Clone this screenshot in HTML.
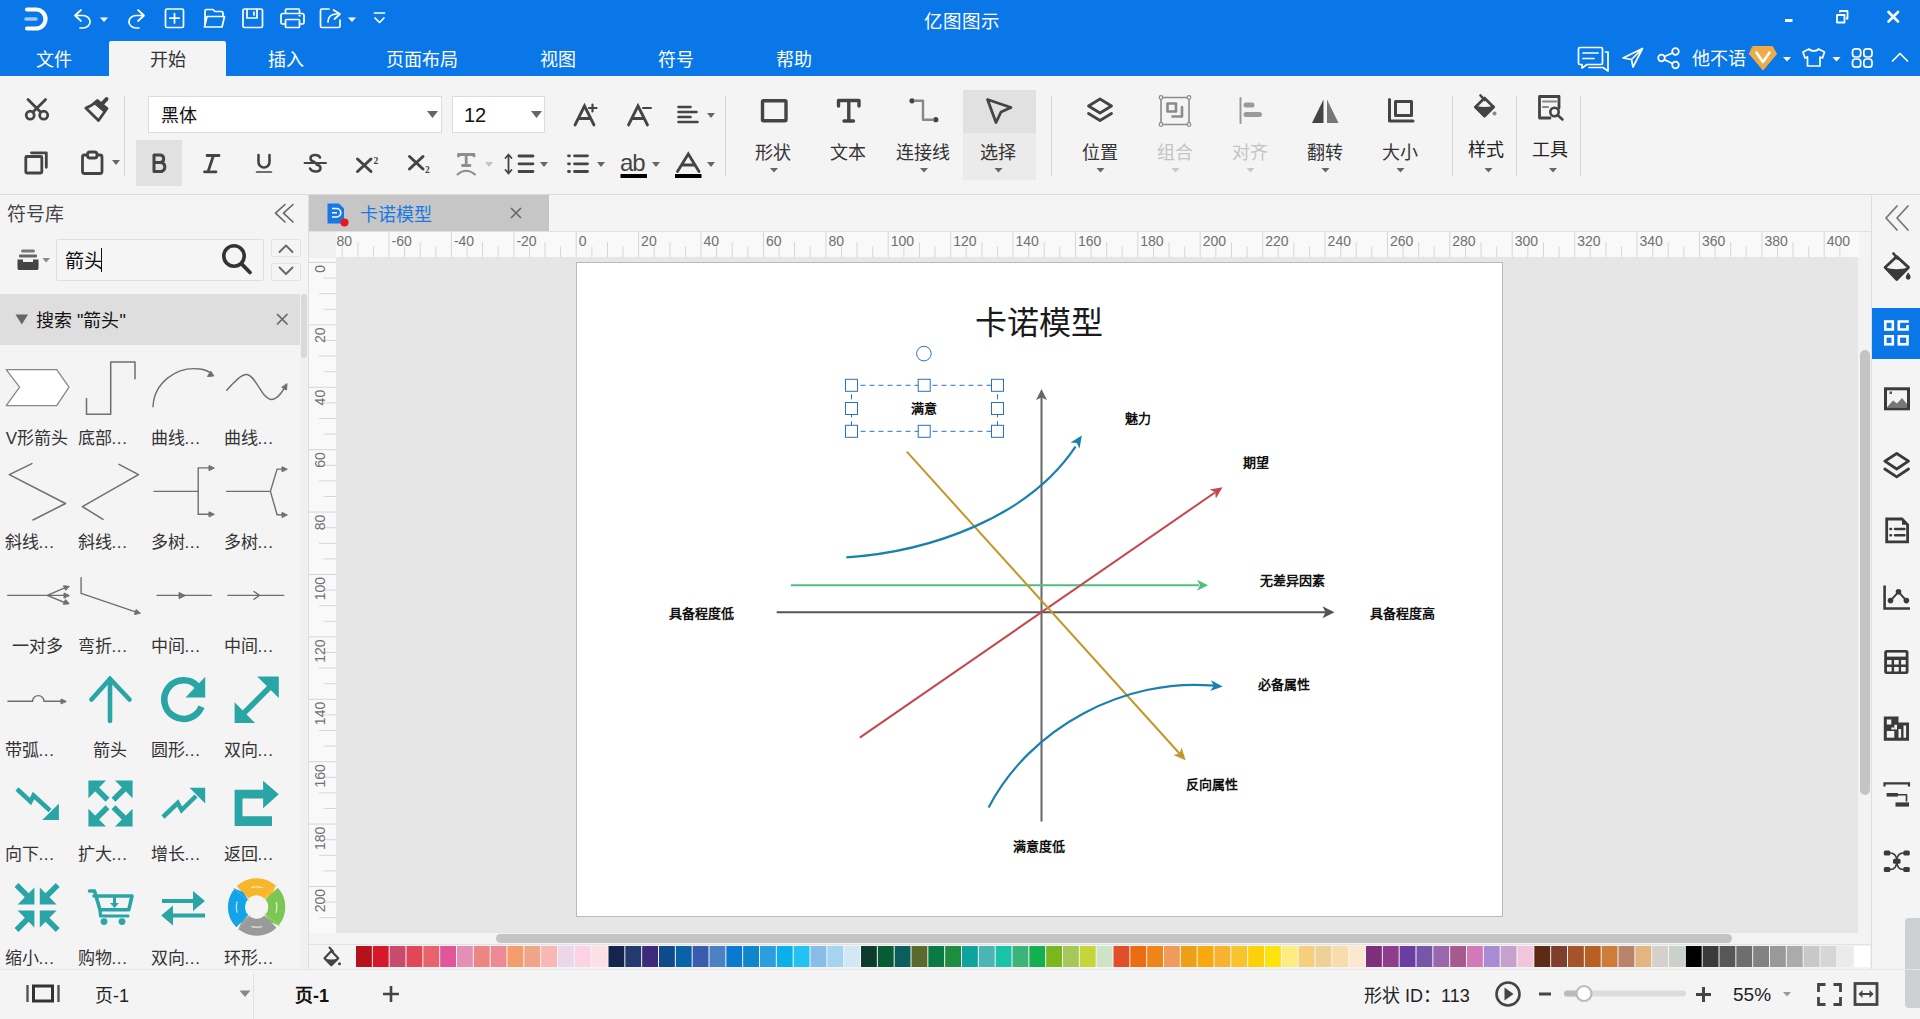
<!DOCTYPE html>
<html lang="zh-CN"><head><meta charset="utf-8">
<style>
*{margin:0;padding:0;box-sizing:border-box}
html,body{width:1920px;height:1019px;overflow:hidden;background:#f4f4f4;font-family:"Liberation Sans",sans-serif;color:#333}
.a{position:absolute}
svg{position:absolute;overflow:visible}
.t{position:absolute;white-space:nowrap;line-height:1}
.mn{position:absolute;top:50px;font-size:18px;color:#fff;line-height:20px;white-space:nowrap}
.lb{position:absolute;top:142.5px;font-size:18px;color:#333;line-height:20px;white-space:nowrap}
.sl{position:absolute;font-size:17px;color:#333;line-height:18px;white-space:nowrap}
</style></head><body>

<div class="a" style="left:0;top:0;width:1920px;height:76px;background:#0977e8"></div>
<div class="a" style="left:109px;top:41px;width:117px;height:36px;background:#f4f4f4;border-radius:2px 2px 0 0"></div>
<div class="t" style="left:924px;top:12.5px;font-size:18.5px;color:#fff">亿图图示</div>
<div class="mn" style="left:36px;color:#fff">文件</div>
<div class="mn" style="left:150px;color:#333">开始</div>
<div class="mn" style="left:268px;color:#fff">插入</div>
<div class="mn" style="left:386px;color:#fff">页面布局</div>
<div class="mn" style="left:540px;color:#fff">视图</div>
<div class="mn" style="left:658px;color:#fff">符号</div>
<div class="mn" style="left:776px;color:#fff">帮助</div>
<div class="t" style="left:1692px;top:50px;font-size:18px;color:#fff">他不语</div>
<svg style="left:0;top:0" width="1920" height="76" fill="none" stroke="#fff" stroke-width="1.7" stroke-linecap="round" stroke-linejoin="round">
 <path d="M27 9.5 H36 A9.5 9.5 0 0 1 36 28.5 H27" stroke-width="4.2"/>
 <path d="M26 19 H36" stroke-width="3.5" stroke="#9cc8f5"/>
 <path d="M75 15.5 L81 10 M75 15.5 L81 21 M75.5 15.5 H83 A7 6.2 0 0 1 83 28 H80"/>
 <path d="M100 17.5 H108 L104 22 Z" fill="#fff" stroke="none"/>
 <path d="M144 15.5 L138 10 M144 15.5 L138 21 M143.5 15.5 H136 A7 6.2 0 0 0 136 28 H139"/>
 <rect x="165.5" y="9" width="18" height="18.5" rx="1.5"/>
 <path d="M174.5 13.5 V23 M169.8 18.2 H179.2"/>
 <path d="M205 27 V11 A1.5 1.5 0 0 1 206.5 9.5 H213 L215 11.5 H221.5 A1.5 1.5 0 0 1 223 13 V15.5 M204.5 27 L207 16.5 H224.5 L222 27 Z"/>
 <rect x="243" y="9" width="19.5" height="18.5" rx="1.5"/>
 <path d="M247 9.5 V18 H257 V9.5 M254 12 V15"/>
 <path d="M285.5 13.5 V10 A1 1 0 0 1 286.5 9 H298.5 A1 1 0 0 1 299.5 10 V13.5 M285.5 24 H282.5 A1.5 1.5 0 0 1 281 22.5 V15.5 A2 2 0 0 1 283 13.5 H302 A2 2 0 0 1 304 15.5 V22.5 A1.5 1.5 0 0 1 302.5 24 H299.5"/>
 <rect x="285.5" y="19.5" width="14" height="8" rx="1"/>
 <path d="M299 15.8 H300" stroke-width="1.5"/>
 <path d="M329 9 H322 A1.5 1.5 0 0 0 320.5 10.5 V26 A1.5 1.5 0 0 0 322 27.5 H338.5 A1.5 1.5 0 0 0 340 26 V20"/>
 <path d="M328 22 C328 16 332 14 337 14 M333.5 10 L340 14 L334.5 19"/>
 <path d="M348 17.5 H356 L352 22 Z" fill="#fff" stroke="none"/>
 <path d="M374.5 13 H384.5"/>
 <path d="M375 18 L379.5 22.5 L384 18"/>
 <path d="M1785 20.5 H1792.5" stroke-width="3" stroke-linecap="butt"/>
 <rect x="1837" y="15" width="7.5" height="7.5" stroke-width="1.8"/>
 <path d="M1840 12.5 V11 H1847.5 V18.5 H1846" stroke-width="1.8" stroke-linecap="butt"/>
 <path d="M1888.5 12 L1898 21.5 M1898 12 L1888.5 21.5" stroke-width="2.6"/>
 <path d="M1580 47.5 H1601 A1.5 1.5 0 0 1 1602.5 49 V63 A1.5 1.5 0 0 1 1601 64.5 H1587 L1582 68 V64.5 H1580 A1.5 1.5 0 0 1 1578.5 63 V49 A1.5 1.5 0 0 1 1580 47.5 Z"/>
 <path d="M1583 53 H1598 M1583 58.5 H1594"/>
 <path d="M1605.5 52 H1608 V71 L1603 67.5 H1589"/>
 <path d="M1642.5 48.5 L1623 58 L1631.5 59.5 L1633 67 Z M1631.5 59.5 L1642.5 48.5"/>
 <circle cx="1675.5" cy="51.5" r="3.3"/><circle cx="1661.5" cy="58" r="3.3"/><circle cx="1675.5" cy="65" r="3.3"/>
 <path d="M1664.5 56.5 L1672.5 53 M1664.5 59.7 L1672.5 63.5"/>
 <path d="M1753 46.5 H1772.5 L1776.5 54 L1763 70 L1749.5 54 Z" fill="#f0ab45" stroke="#f0ab45" stroke-width="1"/>
 <path d="M1756.5 52.5 L1763 62 L1769.5 52.5" stroke-width="2.6"/>
 <path d="M1783 57 H1791 L1787 61.5 Z" fill="#fff" stroke="none"/>
 <path d="M1809 49 L1803 52 L1805 58 L1807.5 57 V66 H1820 V57 L1822.5 58 L1824.5 52 L1818.5 49 C1817 51.5 1810.5 51.5 1809 49 Z"/>
 <path d="M1832.5 57 H1840.5 L1836.5 61.5 Z" fill="#fff" stroke="none"/>
 <rect x="1852.5" y="48.8" width="8.2" height="8.2" rx="3"/><rect x="1863.8" y="48.8" width="8.2" height="8.2" rx="3"/>
 <rect x="1852.5" y="59" width="8.2" height="8.2" rx="3"/><rect x="1863.8" y="59" width="8.2" height="8.2" rx="3"/>
 <path d="M1892.5 61 L1900 53.5 L1907.5 61"/>
</svg>
<div class="a" style="left:0;top:194px;width:1920px;height:1px;background:#dadada"></div>
<div class="a" style="left:136px;top:140px;width:46px;height:46px;background:#e1e1e1"></div>
<div class="a" style="left:963px;top:90px;width:73px;height:43px;background:#e1e1e1"></div>
<div class="a" style="left:963px;top:133px;width:73px;height:47px;background:#ebebeb"></div>
<div class="a" style="left:148px;top:96px;width:294px;height:37px;background:#fff;border:1px solid #dcdcdc"></div>
<div class="a" style="left:452px;top:96px;width:93px;height:37px;background:#fff;border:1px solid #dcdcdc"></div>
<div class="t" style="left:161px;top:107px;font-size:18px;color:#111">黑体</div>
<div class="t" style="left:464px;top:105px;font-size:20px;color:#111">12</div>
<div class="a" style="left:124px;top:96px;width:1px;height:80px;background:#d4d4d4"></div>
<div class="a" style="left:725px;top:96px;width:1px;height:80px;background:#d4d4d4"></div>
<div class="a" style="left:1051px;top:96px;width:1px;height:80px;background:#d4d4d4"></div>
<div class="a" style="left:1452px;top:96px;width:1px;height:80px;background:#d4d4d4"></div>
<div class="a" style="left:1516px;top:96px;width:1px;height:80px;background:#d4d4d4"></div>
<div class="a" style="left:1580px;top:96px;width:1px;height:80px;background:#d4d4d4"></div>
<div class="lb" style="left:755px;width:36px;text-align:center;color:#333">形状</div>
<div class="lb" style="left:830px;width:36px;text-align:center;color:#333">文本</div>
<div class="lb" style="left:896px;width:54px;text-align:center;color:#333">连接线</div>
<div class="lb" style="left:980px;width:36px;text-align:center;color:#333">选择</div>
<div class="lb" style="left:1082px;width:36px;text-align:center;color:#333">位置</div>
<div class="lb" style="left:1157px;width:36px;text-align:center;color:#c4c4c4">组合</div>
<div class="lb" style="left:1232px;width:36px;text-align:center;color:#c4c4c4">对齐</div>
<div class="lb" style="left:1307px;width:36px;text-align:center;color:#333">翻转</div>
<div class="lb" style="left:1382px;width:36px;text-align:center;color:#333">大小</div>
<div class="lb" style="left:1468px;top:139.5px;color:#222">样式</div>
<div class="lb" style="left:1532px;top:139.5px;color:#222">工具</div>
<svg style="left:0;top:0" width="1920" height="200" fill="none" stroke="#444" stroke-width="2.8" stroke-linecap="round" stroke-linejoin="round"><circle cx="30.2" cy="115.2" r="4"/><circle cx="43.7" cy="115.2" r="4"/><path d="M28 99.5 L40.5 112 M45.6 99.5 L33 112" /><path d="M85.8 108 Q92 106 97.5 100.5 L107 108.5 L98.5 120.5 Z" stroke-width="2.8"/><path d="M97.5 100.5 L107 108.5 L104.5 112.5 L94.5 104 Z" fill="#444" stroke-width="1"/><path d="M102 104 L106.5 99" stroke-width="4"/><rect x="25.8" y="156.5" width="16" height="16.5" rx="1"/><path d="M31.5 152.8 H46.3 V167.3"/><rect x="82.5" y="155" width="19.5" height="18.5" rx="2"/><rect x="87.5" y="152" width="9.5" height="6" rx="2.5" fill="#f4f4f4"/><path d="M112 160 H120 L116.0 165 Z" fill="#666" stroke="none"/><path d="M154 155 V171.5 H161.5 A4.7 4.7 0 0 0 161.5 162.5 H154 M154 155 H160.5 A3.8 3.8 0 0 1 160.5 162.5" stroke-width="3"/><path d="M207 155.5 H219 M204.5 171.8 H216 M213.5 155.5 L208 171.8" stroke-width="2.8"/><path d="M258.5 155 V162 A5.3 5.3 0 0 0 269.5 162 V155" stroke-width="2.6"/><path d="M256.5 172 H271.5" stroke-width="1.6"/><path d="M320 157.5 C318.5 154 310.5 154 310.5 158.5 C310.5 160.5 312.5 161.5 314.5 162 M316.5 164.5 C318.5 165 320.5 166 320.5 168 C320.5 172.5 312 172.5 310 168.5" stroke-width="2.6"/><path d="M304.5 163 H326" stroke-width="1.8"/><path d="M357.5 159 L371 171.5 M371 159 L357.5 171.5" stroke-width="3"/><text x="373.5" y="163.5" font-size="9.5" fill="#444" stroke="none" font-family="Liberation Serif" font-weight="bold">2</text><path d="M409.5 156.5 L423 169 M423 156.5 L409.5 169" stroke-width="3"/><text x="425" y="172.5" font-size="9.5" fill="#444" stroke="none" font-family="Liberation Serif" font-weight="bold">2</text><g stroke="#8d8d8d"><path d="M458.5 156 V154.5 H474 V156 M466.2 154.5 V165.5 M462.5 165.5 H470" stroke-width="2.8"/><path d="M457.5 174.5 Q466 167 475 174.5" stroke-width="2"/></g><path d="M485 162 H493 L489.0 167 Z" fill="#c4c4c4" stroke="none"/><path d="M508.5 155 V173.5 M505.5 158 L508.5 154.5 L511.5 158 M505.5 170 L508.5 173.5 L511.5 170" stroke-width="1.8"/><path d="M519 156 H533 M519 163.8 H533 M519 171.5 H533" stroke-width="2.8"/><path d="M540 162 H548 L544.0 167 Z" fill="#666" stroke="none"/><path d="M568.5 155.8 H569.5 M568.5 163.8 H569.5 M568.5 171.5 H569.5" stroke-width="2.8"/><path d="M574.5 155.8 H587.5 M574.5 163.8 H587.5 M574.5 171.5 H587.5" stroke-width="2.8"/><path d="M597 162 H605 L601.0 167 Z" fill="#666" stroke="none"/><text x="620" y="171" font-size="24" fill="#444" stroke="none" font-family="Liberation Sans" letter-spacing="-1">ab</text><rect x="620.5" y="174" width="26.5" height="4" fill="#000" stroke="none"/><path d="M652 162 H660 L656.0 167 Z" fill="#666" stroke="none"/><path d="M677.5 171.5 L688.3 154 L699 171.5 M681.5 165 H695" stroke-width="2.8" stroke-linejoin="miter"/><rect x="675" y="174" width="26.5" height="4" fill="#000" stroke="none"/><path d="M707 162 H715 L711.0 167 Z" fill="#666" stroke="none"/><path d="M575 125 L584.5 106 L594 125 M578.5 118.5 H590.5" stroke-width="2.8" stroke-linejoin="miter"/><path d="M592.5 104.5 V111.5 M589 108 H596.5" stroke-width="2.2"/><path d="M628.5 125 L638 106 L647.5 125 M632 118.5 H644" stroke-width="2.8" stroke-linejoin="miter"/><path d="M643 108 H651" stroke-width="2"/><path d="M678.5 107 H690.5 M678.5 112 H696.5 M678.5 117 H690.5 M678.5 122 H697.5" stroke-width="2.6"/><path d="M707 113 H715 L711.0 118 Z" fill="#666" stroke="none"/><path d="M427 111 H438 L432.5 118 Z" fill="#666" stroke="none"/><path d="M531 111 H542 L536.5 118 Z" fill="#666" stroke="none"/><rect x="762.5" y="100.8" width="23.5" height="20" rx="1" stroke-width="3.4"/><path d="M770 168 H778 L774.0 172.5 Z" fill="#666" stroke="none"/><path d="M838.5 106 V100.5 H859 V106 M848.8 100.5 V121 M844 121 H853.5" stroke-width="3.4"/><circle cx="912" cy="100.8" r="2.6" fill="#444" stroke="none"/><circle cx="935.8" cy="119.7" r="2.6" fill="#444" stroke="none"/><path d="M915 100.8 H923 V119.7 H933" stroke="#888" stroke-width="2.4"/><path d="M920 168 H928 L924.0 172.5 Z" fill="#666" stroke="none"/><path d="M987.5 99.5 L1011 107.5 L1001 112 L996 122.5 Z" stroke-width="2.8"/><path d="M994.5 168 H1002.5 L998.5 172.5 Z" fill="#666" stroke="none"/><path d="M1100 99 L1111.5 106 L1100 113 L1088.5 106 Z" stroke-width="2.8"/><path d="M1088.5 113.5 L1100 120.5 L1111.5 113.5" stroke-width="2.8"/><path d="M1096.5 168 H1104.5 L1100.5 172.5 Z" fill="#666" stroke="none"/><g stroke="#8a8a8a" stroke-width="1.6"><rect x="1161" y="97.5" width="28" height="27"/><rect x="1167.5" y="103.5" width="8.5" height="8" stroke-width="2.6"/><path d="M1172.5 116.5 H1182 V107" stroke-width="2.6"/></g><g fill="#f4f4f4" stroke="#8a8a8a" stroke-width="1.2"><circle cx="1161" cy="97.5" r="1.8"/><circle cx="1189" cy="97.5" r="1.8"/><circle cx="1161" cy="124.5" r="1.8"/><circle cx="1189" cy="124.5" r="1.8"/></g><path d="M1171.5 168 H1179.5 L1175.5 172.5 Z" fill="#c8c8c8" stroke="none"/><g stroke="#9a9a9a"><path d="M1240.5 98 V123" stroke-width="2"/><path d="M1246 105 H1252 M1246 114.5 H1259.5" stroke-width="5"/></g><path d="M1246.5 168 H1254.5 L1250.5 172.5 Z" fill="#c8c8c8" stroke="none"/><path d="M1323.5 99.5 V123 H1312 Z" fill="#444" stroke="none"/><path d="M1327 99.5 V123 H1338.5 Z" fill="#777" stroke="none"/><path d="M1321.5 168 H1329.5 L1325.5 172.5 Z" fill="#666" stroke="none"/><path d="M1389.5 99.5 V121 H1413" stroke-width="3"/><rect x="1395.5" y="101.5" width="16" height="14" stroke-width="3"/><path d="M1396.5 168 H1404.5 L1400.5 172.5 Z" fill="#666" stroke="none"/><path d="M1480.5 95.5 L1484.5 100" stroke-width="2.6"/><path d="M1475.5 107 L1484.5 98 L1493.5 107 L1484.5 116 Z" stroke-width="2.6"/><path d="M1475.5 107 Q1484.5 110 1493.5 107 L1484.5 116 Z" fill="#444"/><circle cx="1494.5" cy="113.5" r="2" fill="#888" stroke="none"/><path d="M1484.5 168 H1492.5 L1488.5 172.5 Z" fill="#666" stroke="none"/><path d="M1559 108 V96.5 H1539.5 V118 H1550" stroke-width="2.8"/><path d="M1543 101.5 H1556 M1543 107 H1548" stroke="#888" stroke-width="2.2"/><circle cx="1554.5" cy="112" r="4.2" stroke-width="2.6"/><path d="M1557.5 115 L1562.5 119.5" stroke-width="2.6"/><path d="M1549 168 H1557 L1553.0 172.5 Z" fill="#666" stroke="none"/></svg>
<div class="t" style="left:7px;top:205px;font-size:19px;color:#444">符号库</div>
<div class="a" style="left:56px;top:239px;width:208px;height:42px;border:1px solid #dedede;background:#f5f5f5;border-radius:2px"></div>
<div class="a" style="left:271px;top:239px;width:30px;height:18px;border:1px solid #e3e3e3;border-radius:2px"></div>
<div class="a" style="left:271px;top:263px;width:30px;height:18px;border:1px solid #e3e3e3;border-radius:2px"></div>
<div class="t" style="left:65px;top:252px;font-size:19px;color:#111">箭头</div>
<div class="a" style="left:101px;top:248px;width:1px;height:24px;background:#111"></div>
<div class="a" style="left:0;top:294px;width:300px;height:51px;background:#dedede"></div>
<div class="t" style="left:36px;top:312px;font-size:18px;color:#111">搜索 "箭头"</div>
<div class="a" style="left:300px;top:294px;width:8px;height:675px;background:#f0f0f0"></div>
<div class="a" style="left:301px;top:294px;width:6px;height:64px;background:#d9d9d9;border-radius:3px"></div>
<div class="a" style="left:308px;top:195px;width:1px;height:774px;background:#dedede"></div>
<svg style="left:0;top:0" width="310" height="969" fill="none" stroke="#666" stroke-width="1.8" stroke-linecap="round" stroke-linejoin="round"><path d="M285 204.5 L275.5 213.2 L285 222 M293 204.5 L283.5 213.2 L293 222" stroke="#666" stroke-width="1.6"/><g fill="#444" stroke="none"><rect x="21" y="249.5" width="14" height="3" rx="1.5" fill="#777"/><rect x="19" y="254.5" width="18" height="3" rx="1" fill="#666"/><path d="M17.5 259.5 H23 V262 H33 V259.5 H38.5 V268.5 A1.5 1.5 0 0 1 37 270 H19 A1.5 1.5 0 0 1 17.5 268.5 Z"/></g><path d="M42.5 258 H50 L46.2 262.5 Z" fill="#888" stroke="none"/><circle cx="234" cy="256" r="10.2" stroke="#333" stroke-width="3.6"/><path d="M241.8 264.2 L250 272.5" stroke="#333" stroke-width="3.8"/><path d="M279.5 252 L286 245.5 L292.5 252 M279.5 267.5 L286 274 L292.5 267.5" stroke="#666" stroke-width="1.8"/><path d="M15.5 314.5 H28 L21.8 324.5 Z" fill="#666" stroke="none"/><path d="M277.5 314.5 L287 324 M287 314.5 L277.5 324" stroke="#666" stroke-width="1.7"/><path d="M6.2 369.6 H56.7 L69 387.1 L56.7 405.6 H6.2 L19.6 387.1 Z" fill="#fff" stroke="#888" stroke-width="1.3"/><path d="M86.5 398.4 V414.3 H110.7 V362 H135 V378.8" stroke="#6e6e6e" stroke-width="1.5"/><path d="M153 406.7 C154 383 176 366 200 369 C206 370 210 372 212 374" stroke="#6e6e6e" stroke-width="1.4"/><path d="M213.5 376 L207.5 376.5 L210.5 371.5 Z" fill="#6e6e6e" stroke="#6e6e6e" stroke-width="1"/><path d="M226.7 390.2 C236 380 242 374 247 374.5 C256 375.5 262 400 272 399.5 C278 399 282 392 285.5 386.5" stroke="#6e6e6e" stroke-width="1.4"/><path d="M287 384 L286.5 390 L282 387.5 Z" fill="#6e6e6e" stroke="#6e6e6e" stroke-width="1"/><path d="M31.9 463.7 L9.3 474.7 L65.5 503.5 L33 520" stroke="#6e6e6e" stroke-width="1.5"/><path d="M119 464.4 L138.5 474.7 L82.4 506.6 L103 519.4" stroke="#6e6e6e" stroke-width="1.5"/><path d="M154 491.4 H198.2 M198.2 467.9 V514.2 M198.2 467.9 H211 M198.2 514.2 H211" stroke="#6e6e6e" stroke-width="1.4"/><path d="M214 467.9 L209 465.5 V470.3 Z M214 514.2 L209 511.8 V516.6 Z" fill="#6e6e6e" stroke="#6e6e6e" stroke-width="1"/><path d="M226.7 491.4 H270.4 L277.1 469.1 H284 M270.4 491.4 L277.1 514.8 H284" stroke="#6e6e6e" stroke-width="1.4"/><path d="M287 469.1 L282 466.7 V471.5 Z M287 514.8 L282 512.4 V517.2 Z" fill="#6e6e6e" stroke="#6e6e6e" stroke-width="1"/><path d="M7.7 595.4 H68 M47.2 595.4 L67 586.8 M47.2 595.4 L67 603.5" stroke="#6e6e6e" stroke-width="1.4"/><path d="M69 586.3 L63.5 585.8 L65.5 590 Z M69 595.4 L64 593 V597.8 Z M69 603.5 L65.5 599.5 L63.5 604 Z" fill="#6e6e6e" stroke="#6e6e6e" stroke-width="1"/><path d="M81.1 577.6 V593.4 L137 612.3" stroke="#6e6e6e" stroke-width="1.4"/><path d="M140 613.3 L134.5 614.5 L136 609.8 Z" fill="#6e6e6e" stroke="#6e6e6e" stroke-width="1"/><path d="M157 595.4 H211.3" stroke="#6e6e6e" stroke-width="1.4"/><path d="M185 595.4 L179 592.5 V598.3 Z" fill="#6e6e6e" stroke="#6e6e6e" stroke-width="1"/><path d="M227.9 595.4 H283.7 M254 591.5 L259.5 595.4 L254 599.3" stroke="#6e6e6e" stroke-width="1.4"/><path d="M7.9 701.3 H32.6 A5.7 5.7 0 0 1 44 701.3 H63" stroke="#6e6e6e" stroke-width="1.4"/><path d="M66 701.3 L61 699 V703.6 Z" fill="#6e6e6e" stroke="#6e6e6e" stroke-width="1"/><g stroke="#2aa5a6" stroke-width="4.6"><path d="M110 679 V721" stroke-linecap="round"/><path d="M91.5 699.5 L110 679 L129.5 699.5" stroke-linecap="round" stroke-linejoin="miter"/></g><path d="M197.94 686.69 A19.3 19.3 0 1 0 201.49 706.83" stroke="#2aa5a6" stroke-width="6.6" stroke-linecap="butt"/><path d="M185.5 697.5 L205.2 676.8 V697.5 Z" fill="#2aa5a6" stroke="none"/><path d="M240.5 716.5 L272 685" stroke="#2aa5a6" stroke-width="5.5" stroke-linecap="butt"/><path d="M257.2 676.4 H278.8 V698 Z M234.6 702.3 V722.9 H255 Z" fill="#2aa5a6" stroke="none"/><path d="M17 789 L30.5 801.5 L33.5 795.5 L50 810.5" stroke="#2aa5a6" stroke-width="4.5" stroke-linecap="butt" stroke-linejoin="miter"/><path d="M58.9 803.4 V820.1 H42.2 Z" fill="#2aa5a6" stroke="none"/><g fill="#2aa5a6" stroke="none"><path d="M88.4 780.6 H106 L88.4 798.2 Z M132.6 780.6 H115 L132.6 798.2 Z M88.4 826.4 H106 L88.4 808.8 Z M132.6 826.4 H115 L132.6 808.8 Z"/></g><g stroke="#2aa5a6" stroke-width="5.5" stroke-linecap="butt"><path d="M94 786.2 L107.5 799.7 M127 786.2 L113.5 799.7 M94 820.8 L107.5 807.3 M127 820.8 L113.5 807.3"/></g><path d="M163 817 L177.7 803 L181.6 810 L196 796" stroke="#2aa5a6" stroke-width="4.5" stroke-linecap="butt" stroke-linejoin="miter"/><path d="M189.5 787.7 H205.2 V803.4 Z" fill="#2aa5a6" stroke="none"/><path d="M263.1 780.8 L278.8 794.2 L263.1 808.3 V798.5 H242.5 V816.2 H272 V826 H234.6 V789.7 H263.1 Z" fill="#2aa5a6" stroke="none"/><g fill="#2aa5a6" stroke="none"><path d="M34.4 904.4 V887.6 L17.6 904.4 Z M39.8 904.4 V887.6 L56.6 904.4 Z M34.4 910.6 V927.4 L17.6 910.6 Z M39.8 910.6 V927.4 L56.6 910.6 Z"/></g><g stroke="#2aa5a6" stroke-width="5.5" stroke-linecap="butt"><path d="M16.5 885 L28 896.5 M57.7 885 L46.2 896.5 M16.5 930 L28 918.5 M57.7 930 L46.2 918.5"/></g><g stroke="#2aa5a6" fill="none" stroke-linejoin="round" stroke-linecap="round"><path d="M89.5 891 H94.5 L100 909.8 H128.8 L132 896 H94" stroke-width="3.6"/><path d="M100 909.8 L100.5 916 H128" stroke-width="3.2"/><path d="M114.5 897.5 V905.5" stroke-width="3"/></g><path d="M110 903 H119 L114.5 908 Z" fill="#2aa5a6" stroke="none"/><circle cx="104" cy="921.6" r="3.4" fill="#2aa5a6" stroke="none"/><circle cx="122" cy="921.6" r="3.4" fill="#2aa5a6" stroke="none"/><path d="M162 901 H195 M170 915.5 H205" stroke="#2aa5a6" stroke-width="4" stroke-linecap="butt"/><path d="M193 891 L205 901 L193 911 Z M173 905.5 L161.2 915.5 L173 925.5 Z" fill="#2aa5a6" stroke="none"/><path d="M242.57 892.47 A20.2 20.2 0 0 1 269.85 891.75" stroke="#f8b62a" stroke-width="17" fill="none" stroke-linecap="butt"/><path d="M276.74 883.83 L272.07 894.02 L262.96 899.68 Z" fill="#f8b62a" stroke="none"/><path d="M251.94 887.34 A20.2 20.2 0 0 1 261.94 887.52" stroke="#fff" stroke-width="1.3" opacity="0.75" fill="none" stroke-dasharray="2 1"/><path d="M271.61 893.48 A20.2 20.2 0 0 1 272.30 919.71" stroke="#7cc653" stroke-width="17" fill="none" stroke-linecap="butt"/><path d="M280.46 926.32 L270.12 922.01 L264.14 913.10 Z" fill="#7cc653" stroke="none"/><path d="M276.26 902.34 A20.2 20.2 0 0 1 276.08 912.34" stroke="#fff" stroke-width="1.3" opacity="0.75" fill="none" stroke-dasharray="2 1"/><path d="M270.63 921.53 A20.2 20.2 0 0 1 244.16 922.92" stroke="#9a9a9a" stroke-width="17" fill="none" stroke-linecap="butt"/><path d="M237.70 931.19 L241.83 920.78 L250.63 914.64 Z" fill="#9a9a9a" stroke="none"/><path d="M261.77 926.53 A20.2 20.2 0 0 1 251.77 926.61" stroke="#fff" stroke-width="1.3" opacity="0.75" fill="none" stroke-dasharray="2 1"/><path d="M242.32 921.28 A20.2 20.2 0 0 1 240.90 894.29" stroke="#14a3e6" stroke-width="17" fill="none" stroke-linecap="butt"/><path d="M232.74 887.68 L243.08 891.99 L249.06 900.90 Z" fill="#14a3e6" stroke="none"/><path d="M237.07 912.17 A20.2 20.2 0 0 1 236.99 902.17" stroke="#fff" stroke-width="1.3" opacity="0.75" fill="none" stroke-dasharray="2 1"/></svg>
<div class="sl" style="left:-3px;top:430px;width:80px;text-align:center">V形箭头</div>
<div class="sl" style="left:77.5px;top:430px">底部<span style="letter-spacing:0.6px">...</span></div>
<div class="sl" style="left:150.5px;top:430px">曲线<span style="letter-spacing:0.6px">...</span></div>
<div class="sl" style="left:223.5px;top:430px">曲线<span style="letter-spacing:0.6px">...</span></div>
<div class="sl" style="left:4.5px;top:534px">斜线<span style="letter-spacing:0.6px">...</span></div>
<div class="sl" style="left:77.5px;top:534px">斜线<span style="letter-spacing:0.6px">...</span></div>
<div class="sl" style="left:150.5px;top:534px">多树<span style="letter-spacing:0.6px">...</span></div>
<div class="sl" style="left:223.5px;top:534px">多树<span style="letter-spacing:0.6px">...</span></div>
<div class="sl" style="left:-3px;top:638px;width:80px;text-align:center">一对多</div>
<div class="sl" style="left:77.5px;top:638px">弯折<span style="letter-spacing:0.6px">...</span></div>
<div class="sl" style="left:150.5px;top:638px">中间<span style="letter-spacing:0.6px">...</span></div>
<div class="sl" style="left:223.5px;top:638px">中间<span style="letter-spacing:0.6px">...</span></div>
<div class="sl" style="left:4.5px;top:742px">带弧<span style="letter-spacing:0.6px">...</span></div>
<div class="sl" style="left:70px;top:742px;width:80px;text-align:center">箭头</div>
<div class="sl" style="left:150.5px;top:742px">圆形<span style="letter-spacing:0.6px">...</span></div>
<div class="sl" style="left:223.5px;top:742px">双向<span style="letter-spacing:0.6px">...</span></div>
<div class="sl" style="left:4.5px;top:846px">向下<span style="letter-spacing:0.6px">...</span></div>
<div class="sl" style="left:77.5px;top:846px">扩大<span style="letter-spacing:0.6px">...</span></div>
<div class="sl" style="left:150.5px;top:846px">增长<span style="letter-spacing:0.6px">...</span></div>
<div class="sl" style="left:223.5px;top:846px">返回<span style="letter-spacing:0.6px">...</span></div>
<div class="sl" style="left:4.5px;top:950px">缩小<span style="letter-spacing:0.6px">...</span></div>
<div class="sl" style="left:77.5px;top:950px">购物<span style="letter-spacing:0.6px">...</span></div>
<div class="sl" style="left:150.5px;top:950px">双向<span style="letter-spacing:0.6px">...</span></div>
<div class="sl" style="left:223.5px;top:950px">环形<span style="letter-spacing:0.6px">...</span></div>
<div class="a" style="left:309px;top:195px;width:240px;height:36px;background:#c6c6c6"></div>
<div class="t" style="left:360px;top:206px;font-size:18px;color:#1a7ae0">卡诺模型</div>
<svg style="left:0;top:0" width="1920" height="240" fill="none">
<path d="M327.5 203.5 H339 L344 208.5 V223.5 H327.5 Z" fill="#1677e6"/>
<path d="M332 208.5 H336.5 A4.2 4.2 0 0 1 336.5 217 H332 M332 212.8 H337" stroke="#fff" stroke-width="1.6"/>
<circle cx="344.5" cy="222.5" r="4" fill="#e8151a"/>
<path d="M511 208 L521 218 M521 208 L511 218" stroke="#666" stroke-width="1.6"/>
</svg>
<div class="a" style="left:309px;top:231px;width:1562px;height:1px;background:#e0e0e0"></div>
<div class="a" style="left:309px;top:232px;width:1550px;height:25px;background:#f9f9f9"></div>
<div class="a" style="left:309px;top:257px;width:27px;height:677px;background:#f9f9f9"></div>
<div class="a" style="left:309px;top:232px;width:27px;height:26px;background:#f0f0f0"></div>
<div class="a" style="left:336px;top:257px;width:1522px;height:676px;background:#e6e6e6"></div>
<div class="a" style="left:576px;top:262px;width:927px;height:655px;background:#fff;border:1px solid #b9b9b9"></div>
<div class="a" style="left:336px;top:232px;width:1522px;height:25px;overflow:hidden">
<svg style="left:-336px;top:-232px" width="1920" height="260"><path d="M342.2 246.5 V257" stroke="#d6d6d6" stroke-width="1"/><path d="M357.9 242 V257" stroke="#d6d6d6" stroke-width="1"/><path d="M373.4 246.5 V257" stroke="#d6d6d6" stroke-width="1"/><path d="M389.0 232 V257" stroke="#d6d6d6" stroke-width="1"/><path d="M404.6 246.5 V257" stroke="#d6d6d6" stroke-width="1"/><path d="M420.2 242 V257" stroke="#d6d6d6" stroke-width="1"/><path d="M435.9 246.5 V257" stroke="#d6d6d6" stroke-width="1"/><path d="M451.4 232 V257" stroke="#d6d6d6" stroke-width="1"/><path d="M467.1 246.5 V257" stroke="#d6d6d6" stroke-width="1"/><path d="M482.6 242 V257" stroke="#d6d6d6" stroke-width="1"/><path d="M498.2 246.5 V257" stroke="#d6d6d6" stroke-width="1"/><path d="M513.9 232 V257" stroke="#d6d6d6" stroke-width="1"/><path d="M529.5 246.5 V257" stroke="#d6d6d6" stroke-width="1"/><path d="M545.0 242 V257" stroke="#d6d6d6" stroke-width="1"/><path d="M560.6 246.5 V257" stroke="#d6d6d6" stroke-width="1"/><path d="M576.2 232 V257" stroke="#d6d6d6" stroke-width="1"/><path d="M591.9 246.5 V257" stroke="#d6d6d6" stroke-width="1"/><path d="M607.5 242 V257" stroke="#d6d6d6" stroke-width="1"/><path d="M623.0 246.5 V257" stroke="#d6d6d6" stroke-width="1"/><path d="M638.6 232 V257" stroke="#d6d6d6" stroke-width="1"/><path d="M654.2 246.5 V257" stroke="#d6d6d6" stroke-width="1"/><path d="M669.9 242 V257" stroke="#d6d6d6" stroke-width="1"/><path d="M685.5 246.5 V257" stroke="#d6d6d6" stroke-width="1"/><path d="M701.0 232 V257" stroke="#d6d6d6" stroke-width="1"/><path d="M716.6 246.5 V257" stroke="#d6d6d6" stroke-width="1"/><path d="M732.2 242 V257" stroke="#d6d6d6" stroke-width="1"/><path d="M747.9 246.5 V257" stroke="#d6d6d6" stroke-width="1"/><path d="M763.5 232 V257" stroke="#d6d6d6" stroke-width="1"/><path d="M779.0 246.5 V257" stroke="#d6d6d6" stroke-width="1"/><path d="M794.6 242 V257" stroke="#d6d6d6" stroke-width="1"/><path d="M810.2 246.5 V257" stroke="#d6d6d6" stroke-width="1"/><path d="M825.9 232 V257" stroke="#d6d6d6" stroke-width="1"/><path d="M841.5 246.5 V257" stroke="#d6d6d6" stroke-width="1"/><path d="M857.0 242 V257" stroke="#d6d6d6" stroke-width="1"/><path d="M872.7 246.5 V257" stroke="#d6d6d6" stroke-width="1"/><path d="M888.2 232 V257" stroke="#d6d6d6" stroke-width="1"/><path d="M903.9 246.5 V257" stroke="#d6d6d6" stroke-width="1"/><path d="M919.5 242 V257" stroke="#d6d6d6" stroke-width="1"/><path d="M935.0 246.5 V257" stroke="#d6d6d6" stroke-width="1"/><path d="M950.7 232 V257" stroke="#d6d6d6" stroke-width="1"/><path d="M966.2 246.5 V257" stroke="#d6d6d6" stroke-width="1"/><path d="M981.9 242 V257" stroke="#d6d6d6" stroke-width="1"/><path d="M997.5 246.5 V257" stroke="#d6d6d6" stroke-width="1"/><path d="M1013.0 232 V257" stroke="#d6d6d6" stroke-width="1"/><path d="M1028.7 246.5 V257" stroke="#d6d6d6" stroke-width="1"/><path d="M1044.2 242 V257" stroke="#d6d6d6" stroke-width="1"/><path d="M1059.8 246.5 V257" stroke="#d6d6d6" stroke-width="1"/><path d="M1075.5 232 V257" stroke="#d6d6d6" stroke-width="1"/><path d="M1091.1 246.5 V257" stroke="#d6d6d6" stroke-width="1"/><path d="M1106.7 242 V257" stroke="#d6d6d6" stroke-width="1"/><path d="M1122.2 246.5 V257" stroke="#d6d6d6" stroke-width="1"/><path d="M1137.8 232 V257" stroke="#d6d6d6" stroke-width="1"/><path d="M1153.5 246.5 V257" stroke="#d6d6d6" stroke-width="1"/><path d="M1169.1 242 V257" stroke="#d6d6d6" stroke-width="1"/><path d="M1184.7 246.5 V257" stroke="#d6d6d6" stroke-width="1"/><path d="M1200.2 232 V257" stroke="#d6d6d6" stroke-width="1"/><path d="M1215.8 246.5 V257" stroke="#d6d6d6" stroke-width="1"/><path d="M1231.5 242 V257" stroke="#d6d6d6" stroke-width="1"/><path d="M1247.1 246.5 V257" stroke="#d6d6d6" stroke-width="1"/><path d="M1262.7 232 V257" stroke="#d6d6d6" stroke-width="1"/><path d="M1278.2 246.5 V257" stroke="#d6d6d6" stroke-width="1"/><path d="M1293.8 242 V257" stroke="#d6d6d6" stroke-width="1"/><path d="M1309.5 246.5 V257" stroke="#d6d6d6" stroke-width="1"/><path d="M1325.1 232 V257" stroke="#d6d6d6" stroke-width="1"/><path d="M1340.7 246.5 V257" stroke="#d6d6d6" stroke-width="1"/><path d="M1356.2 242 V257" stroke="#d6d6d6" stroke-width="1"/><path d="M1371.8 246.5 V257" stroke="#d6d6d6" stroke-width="1"/><path d="M1387.5 232 V257" stroke="#d6d6d6" stroke-width="1"/><path d="M1403.1 246.5 V257" stroke="#d6d6d6" stroke-width="1"/><path d="M1418.7 242 V257" stroke="#d6d6d6" stroke-width="1"/><path d="M1434.2 246.5 V257" stroke="#d6d6d6" stroke-width="1"/><path d="M1449.8 232 V257" stroke="#d6d6d6" stroke-width="1"/><path d="M1465.5 246.5 V257" stroke="#d6d6d6" stroke-width="1"/><path d="M1481.1 242 V257" stroke="#d6d6d6" stroke-width="1"/><path d="M1496.7 246.5 V257" stroke="#d6d6d6" stroke-width="1"/><path d="M1512.2 232 V257" stroke="#d6d6d6" stroke-width="1"/><path d="M1527.8 246.5 V257" stroke="#d6d6d6" stroke-width="1"/><path d="M1543.5 242 V257" stroke="#d6d6d6" stroke-width="1"/><path d="M1559.1 246.5 V257" stroke="#d6d6d6" stroke-width="1"/><path d="M1574.7 232 V257" stroke="#d6d6d6" stroke-width="1"/><path d="M1590.2 246.5 V257" stroke="#d6d6d6" stroke-width="1"/><path d="M1605.9 242 V257" stroke="#d6d6d6" stroke-width="1"/><path d="M1621.5 246.5 V257" stroke="#d6d6d6" stroke-width="1"/><path d="M1637.0 232 V257" stroke="#d6d6d6" stroke-width="1"/><path d="M1652.7 246.5 V257" stroke="#d6d6d6" stroke-width="1"/><path d="M1668.2 242 V257" stroke="#d6d6d6" stroke-width="1"/><path d="M1683.9 246.5 V257" stroke="#d6d6d6" stroke-width="1"/><path d="M1699.5 232 V257" stroke="#d6d6d6" stroke-width="1"/><path d="M1715.0 246.5 V257" stroke="#d6d6d6" stroke-width="1"/><path d="M1730.7 242 V257" stroke="#d6d6d6" stroke-width="1"/><path d="M1746.2 246.5 V257" stroke="#d6d6d6" stroke-width="1"/><path d="M1761.9 232 V257" stroke="#d6d6d6" stroke-width="1"/><path d="M1777.5 246.5 V257" stroke="#d6d6d6" stroke-width="1"/><path d="M1793.0 242 V257" stroke="#d6d6d6" stroke-width="1"/><path d="M1808.7 246.5 V257" stroke="#d6d6d6" stroke-width="1"/><path d="M1824.2 232 V257" stroke="#d6d6d6" stroke-width="1"/><path d="M1839.9 246.5 V257" stroke="#d6d6d6" stroke-width="1"/></svg>
</div>
<svg style="left:0;top:0" width="1920" height="260"><defs><clipPath id="hc"><rect x="336" y="232" width="1522" height="25"/></clipPath></defs><g clip-path="url(#hc)"><text x="336.5" y="246" font-size="14" fill="#707070">80</text><text x="391.5" y="246" font-size="14" fill="#707070">-60</text><text x="453.9" y="246" font-size="14" fill="#707070">-40</text><text x="516.4" y="246" font-size="14" fill="#707070">-20</text><text x="578.8" y="246" font-size="14" fill="#707070">0</text><text x="641.1" y="246" font-size="14" fill="#707070">20</text><text x="703.5" y="246" font-size="14" fill="#707070">40</text><text x="766.0" y="246" font-size="14" fill="#707070">60</text><text x="828.4" y="246" font-size="14" fill="#707070">80</text><text x="890.8" y="246" font-size="14" fill="#707070">100</text><text x="953.2" y="246" font-size="14" fill="#707070">120</text><text x="1015.5" y="246" font-size="14" fill="#707070">140</text><text x="1078.0" y="246" font-size="14" fill="#707070">160</text><text x="1140.3" y="246" font-size="14" fill="#707070">180</text><text x="1202.8" y="246" font-size="14" fill="#707070">200</text><text x="1265.2" y="246" font-size="14" fill="#707070">220</text><text x="1327.6" y="246" font-size="14" fill="#707070">240</text><text x="1390.0" y="246" font-size="14" fill="#707070">260</text><text x="1452.3" y="246" font-size="14" fill="#707070">280</text><text x="1514.8" y="246" font-size="14" fill="#707070">300</text><text x="1577.2" y="246" font-size="14" fill="#707070">320</text><text x="1639.5" y="246" font-size="14" fill="#707070">340</text><text x="1702.0" y="246" font-size="14" fill="#707070">360</text><text x="1764.4" y="246" font-size="14" fill="#707070">380</text><text x="1826.8" y="246" font-size="14" fill="#707070">400</text></g></svg>
<div class="a" style="left:309px;top:258px;width:27px;height:675px;overflow:hidden">
<svg style="left:-309px;top:-258px" width="340" height="940"><path d="M309 262.5 H336" stroke="#d6d6d6" stroke-width="1"/><path d="M323.5 278.1 H336" stroke="#d6d6d6" stroke-width="1"/><path d="M319 293.7 H336" stroke="#d6d6d6" stroke-width="1"/><path d="M323.5 309.3 H336" stroke="#d6d6d6" stroke-width="1"/><path d="M309 324.9 H336" stroke="#d6d6d6" stroke-width="1"/><path d="M323.5 340.5 H336" stroke="#d6d6d6" stroke-width="1"/><path d="M319 356.1 H336" stroke="#d6d6d6" stroke-width="1"/><path d="M323.5 371.7 H336" stroke="#d6d6d6" stroke-width="1"/><path d="M309 387.3 H336" stroke="#d6d6d6" stroke-width="1"/><path d="M323.5 402.9 H336" stroke="#d6d6d6" stroke-width="1"/><path d="M319 418.5 H336" stroke="#d6d6d6" stroke-width="1"/><path d="M323.5 434.1 H336" stroke="#d6d6d6" stroke-width="1"/><path d="M309 449.7 H336" stroke="#d6d6d6" stroke-width="1"/><path d="M323.5 465.3 H336" stroke="#d6d6d6" stroke-width="1"/><path d="M319 480.9 H336" stroke="#d6d6d6" stroke-width="1"/><path d="M323.5 496.5 H336" stroke="#d6d6d6" stroke-width="1"/><path d="M309 512.1 H336" stroke="#d6d6d6" stroke-width="1"/><path d="M323.5 527.7 H336" stroke="#d6d6d6" stroke-width="1"/><path d="M319 543.3 H336" stroke="#d6d6d6" stroke-width="1"/><path d="M323.5 558.9 H336" stroke="#d6d6d6" stroke-width="1"/><path d="M309 574.5 H336" stroke="#d6d6d6" stroke-width="1"/><path d="M323.5 590.1 H336" stroke="#d6d6d6" stroke-width="1"/><path d="M319 605.7 H336" stroke="#d6d6d6" stroke-width="1"/><path d="M323.5 621.3 H336" stroke="#d6d6d6" stroke-width="1"/><path d="M309 636.9 H336" stroke="#d6d6d6" stroke-width="1"/><path d="M323.5 652.5 H336" stroke="#d6d6d6" stroke-width="1"/><path d="M319 668.1 H336" stroke="#d6d6d6" stroke-width="1"/><path d="M323.5 683.7 H336" stroke="#d6d6d6" stroke-width="1"/><path d="M309 699.3 H336" stroke="#d6d6d6" stroke-width="1"/><path d="M323.5 714.9 H336" stroke="#d6d6d6" stroke-width="1"/><path d="M319 730.5 H336" stroke="#d6d6d6" stroke-width="1"/><path d="M323.5 746.1 H336" stroke="#d6d6d6" stroke-width="1"/><path d="M309 761.7 H336" stroke="#d6d6d6" stroke-width="1"/><path d="M323.5 777.3 H336" stroke="#d6d6d6" stroke-width="1"/><path d="M319 792.9 H336" stroke="#d6d6d6" stroke-width="1"/><path d="M323.5 808.5 H336" stroke="#d6d6d6" stroke-width="1"/><path d="M309 824.1 H336" stroke="#d6d6d6" stroke-width="1"/><path d="M323.5 839.7 H336" stroke="#d6d6d6" stroke-width="1"/><path d="M319 855.3 H336" stroke="#d6d6d6" stroke-width="1"/><path d="M323.5 870.9 H336" stroke="#d6d6d6" stroke-width="1"/><path d="M309 886.5 H336" stroke="#d6d6d6" stroke-width="1"/><path d="M323.5 902.1 H336" stroke="#d6d6d6" stroke-width="1"/><path d="M319 917.7 H336" stroke="#d6d6d6" stroke-width="1"/></svg>
</div>
<svg style="left:0;top:0" width="340" height="940"><defs><clipPath id="vc"><rect x="309" y="258" width="27" height="675"/></clipPath></defs><g clip-path="url(#vc)"><text transform="translate(324.5 265.0) rotate(-90)" text-anchor="end" font-size="14" fill="#707070">0</text><text transform="translate(324.5 327.4) rotate(-90)" text-anchor="end" font-size="14" fill="#707070">20</text><text transform="translate(324.5 389.8) rotate(-90)" text-anchor="end" font-size="14" fill="#707070">40</text><text transform="translate(324.5 452.2) rotate(-90)" text-anchor="end" font-size="14" fill="#707070">60</text><text transform="translate(324.5 514.6) rotate(-90)" text-anchor="end" font-size="14" fill="#707070">80</text><text transform="translate(324.5 577.0) rotate(-90)" text-anchor="end" font-size="14" fill="#707070">100</text><text transform="translate(324.5 639.4) rotate(-90)" text-anchor="end" font-size="14" fill="#707070">120</text><text transform="translate(324.5 701.8) rotate(-90)" text-anchor="end" font-size="14" fill="#707070">140</text><text transform="translate(324.5 764.2) rotate(-90)" text-anchor="end" font-size="14" fill="#707070">160</text><text transform="translate(324.5 826.6) rotate(-90)" text-anchor="end" font-size="14" fill="#707070">180</text><text transform="translate(324.5 889.0) rotate(-90)" text-anchor="end" font-size="14" fill="#707070">200</text></g></svg>
<div class="a" style="left:1858px;top:257px;width:13px;height:677px;background:#f3f3f3"></div>
<div class="a" style="left:1860px;top:350px;width:10px;height:445px;background:#c4c4c4;border-radius:5px"></div>
<div class="a" style="left:309px;top:933px;width:1562px;height:12px;background:#f3f3f3"></div>
<div class="a" style="left:496px;top:934px;width:1236px;height:9px;background:#c4c4c4;border-radius:5px"></div>
<div class="a" style="left:1871px;top:195px;width:1px;height:774px;background:#dedede"></div>
<svg style="left:0;top:0" width="1920" height="1019" fill="none"><text x="1039" y="334" font-size="32" fill="#1a1a1a" text-anchor="middle">卡诺模型</text><path d="M776.7 612.2 H1326" stroke="#555" stroke-width="2"/><path d="M1334.5 612.2 L1322.5 618.2 L1325.5 612.2 L1322.5 606.2 Z" fill="#555"/><path d="M1041.5 821.5 V397" stroke="#666" stroke-width="2"/><path d="M1041.5 389.0 L1047.0 400.0 L1041.5 397.5 L1036.0 400.0 Z" fill="#666"/><path d="M791 585.2 H1199" stroke="#4dbf80" stroke-width="2"/><path d="M1208.0 585.2 L1197.0 590.7 L1200.0 585.2 L1197.0 579.7 Z" fill="#4dbf80"/><path d="M859.8 737.6 L1215 492.5" stroke="#c4474b" stroke-width="2"/><path d="M1222.6 487.2 L1215.8 498.5 L1215.2 492.3 L1209.6 489.5 Z" fill="#c4474b"/><path d="M906.8 451.7 L1179.5 753.5" stroke="#c49628" stroke-width="2"/><path d="M1185.6 760.2 L1173.5 755.0 L1179.6 753.5 L1181.6 747.6 Z" fill="#c49628"/><path d="M846.3 557.4 C928.7 551.8 1027.6 518.5 1075.5 446.7" stroke="#1a80b0" stroke-width="2.2"/><path d="M1081.8 435.6 L1079.6 448.6 L1076.8 443.1 L1070.5 442.5 Z" fill="#1a80b0"/><path d="M988.6 807.4 C1030.6 727.1 1124.3 677.7 1213.9 685.7" stroke="#1a80b0" stroke-width="2.2"/><path d="M1222.7 686.5 L1210.3 691.1 L1213.7 685.9 L1211.1 680.2 Z" fill="#1a80b0"/><text x="1138" y="423.0" font-size="13" font-weight="bold" fill="#111" text-anchor="middle">魅力</text><text x="1256" y="467.0" font-size="13" font-weight="bold" fill="#111" text-anchor="middle">期望</text><text x="1292.5" y="584.5" font-size="13" font-weight="bold" fill="#111" text-anchor="middle">无差异因素</text><text x="1402" y="618.0" font-size="13" font-weight="bold" fill="#111" text-anchor="middle">具备程度高</text><text x="701" y="617.5" font-size="13" font-weight="bold" fill="#111" text-anchor="middle">具备程度低</text><text x="1284" y="689.0" font-size="13" font-weight="bold" fill="#111" text-anchor="middle">必备属性</text><text x="1212" y="789.0" font-size="13" font-weight="bold" fill="#111" text-anchor="middle">反向属性</text><text x="1039" y="851.0" font-size="13" font-weight="bold" fill="#111" text-anchor="middle">满意度低</text><text x="924" y="412.5" font-size="13" font-weight="bold" fill="#111" text-anchor="middle">满意</text><path d="M851.5 385.3 H997.5 M851.5 431.3 H997.5 M851.5 385.3 V431.3 M997.5 385.3 V431.3" stroke="#2a6fc8" stroke-width="1" stroke-dasharray="5 4"/><rect x="845.5" y="379.3" width="12" height="12" fill="#fff" stroke="#2a6fc8" stroke-width="1"/><rect x="845.5" y="402.5" width="12" height="12" fill="#fff" stroke="#2a6fc8" stroke-width="1"/><rect x="845.5" y="425.3" width="12" height="12" fill="#fff" stroke="#2a6fc8" stroke-width="1"/><rect x="918.2" y="379.3" width="12" height="12" fill="#fff" stroke="#2a6fc8" stroke-width="1"/><rect x="918.2" y="425.3" width="12" height="12" fill="#fff" stroke="#2a6fc8" stroke-width="1"/><rect x="991.5" y="379.3" width="12" height="12" fill="#fff" stroke="#2a6fc8" stroke-width="1"/><rect x="991.5" y="402.5" width="12" height="12" fill="#fff" stroke="#2a6fc8" stroke-width="1"/><rect x="991.5" y="425.3" width="12" height="12" fill="#fff" stroke="#2a6fc8" stroke-width="1"/><circle cx="923.9" cy="353.6" r="7.3" fill="#fff" stroke="#2a6fc8" stroke-width="1"/></svg>
<div class="a" style="left:309px;top:945px;width:1562px;height:24px;background:#f4f4f4"></div>
<div class="a" style="left:309px;top:944px;width:1562px;height:1px;background:#e2e2e2"></div>
<svg style="left:0;top:0" width="1920" height="1019"><rect x="356.00" y="946" width="15.83" height="21" fill="#b5121b"/><rect x="372.83" y="946" width="15.83" height="21" fill="#d7182a"/><rect x="389.67" y="946" width="15.83" height="21" fill="#c84b6e"/><rect x="406.50" y="946" width="15.83" height="21" fill="#e0485a"/><rect x="423.33" y="946" width="15.83" height="21" fill="#e8636b"/><rect x="440.17" y="946" width="15.83" height="21" fill="#e3559b"/><rect x="457.00" y="946" width="15.83" height="21" fill="#e48fb5"/><rect x="473.83" y="946" width="15.83" height="21" fill="#ed8680"/><rect x="490.67" y="946" width="15.83" height="21" fill="#ee8a96"/><rect x="507.50" y="946" width="15.83" height="21" fill="#f59c6c"/><rect x="524.33" y="946" width="15.83" height="21" fill="#f0a58a"/><rect x="541.17" y="946" width="15.83" height="21" fill="#f6b7b5"/><rect x="558.00" y="946" width="15.83" height="21" fill="#ead7ea"/><rect x="574.83" y="946" width="15.83" height="21" fill="#fbd3e3"/><rect x="591.67" y="946" width="15.83" height="21" fill="#fde0e6"/><rect x="608.50" y="946" width="15.83" height="21" fill="#14244d"/><rect x="625.33" y="946" width="15.83" height="21" fill="#233a6e"/><rect x="642.17" y="946" width="15.83" height="21" fill="#3d2a7a"/><rect x="659.00" y="946" width="15.83" height="21" fill="#0f4a8d"/><rect x="675.83" y="946" width="15.83" height="21" fill="#0a62a8"/><rect x="692.67" y="946" width="15.83" height="21" fill="#3a5cae"/><rect x="709.50" y="946" width="15.83" height="21" fill="#4a80c4"/><rect x="726.33" y="946" width="15.83" height="21" fill="#0b79d0"/><rect x="743.17" y="946" width="15.83" height="21" fill="#0d86cc"/><rect x="760.00" y="946" width="15.83" height="21" fill="#2b9ede"/><rect x="776.83" y="946" width="15.83" height="21" fill="#0bb0ea"/><rect x="793.67" y="946" width="15.83" height="21" fill="#24c2f0"/><rect x="810.50" y="946" width="15.83" height="21" fill="#88bdea"/><rect x="827.33" y="946" width="15.83" height="21" fill="#a5d4f0"/><rect x="844.17" y="946" width="15.83" height="21" fill="#d2e9f5"/><rect x="861.00" y="946" width="15.83" height="21" fill="#0d3b2e"/><rect x="877.83" y="946" width="15.83" height="21" fill="#085c33"/><rect x="894.67" y="946" width="15.83" height="21" fill="#0c5e5e"/><rect x="911.50" y="946" width="15.83" height="21" fill="#5a6a2c"/><rect x="928.33" y="946" width="15.83" height="21" fill="#0a7a44"/><rect x="945.17" y="946" width="15.83" height="21" fill="#1d8d3f"/><rect x="962.00" y="946" width="15.83" height="21" fill="#0ea39c"/><rect x="978.83" y="946" width="15.83" height="21" fill="#4ab5b5"/><rect x="995.67" y="946" width="15.83" height="21" fill="#19c3a9"/><rect x="1012.50" y="946" width="15.83" height="21" fill="#3db37a"/><rect x="1029.33" y="946" width="15.83" height="21" fill="#12b04f"/><rect x="1046.17" y="946" width="15.83" height="21" fill="#7ab61e"/><rect x="1063.00" y="946" width="15.83" height="21" fill="#a6c85a"/><rect x="1079.83" y="946" width="15.83" height="21" fill="#c5d63a"/><rect x="1096.67" y="946" width="15.83" height="21" fill="#cfe3c8"/><rect x="1113.50" y="946" width="15.83" height="21" fill="#e04f2a"/><rect x="1130.33" y="946" width="15.83" height="21" fill="#ea6d12"/><rect x="1147.17" y="946" width="15.83" height="21" fill="#ef8418"/><rect x="1164.00" y="946" width="15.83" height="21" fill="#f09b5a"/><rect x="1180.83" y="946" width="15.83" height="21" fill="#eda014"/><rect x="1197.67" y="946" width="15.83" height="21" fill="#f9a80e"/><rect x="1214.50" y="946" width="15.83" height="21" fill="#f7b230"/><rect x="1231.33" y="946" width="15.83" height="21" fill="#f8c42c"/><rect x="1248.17" y="946" width="15.83" height="21" fill="#fcd00a"/><rect x="1265.00" y="946" width="15.83" height="21" fill="#fde30c"/><rect x="1281.83" y="946" width="15.83" height="21" fill="#fdeb84"/><rect x="1298.67" y="946" width="15.83" height="21" fill="#f5cf7b"/><rect x="1315.50" y="946" width="15.83" height="21" fill="#eed197"/><rect x="1332.33" y="946" width="15.83" height="21" fill="#f8dcae"/><rect x="1349.17" y="946" width="15.83" height="21" fill="#fbe8cf"/><rect x="1366.00" y="946" width="15.83" height="21" fill="#7d2f7c"/><rect x="1382.83" y="946" width="15.83" height="21" fill="#8e3d8c"/><rect x="1399.67" y="946" width="15.83" height="21" fill="#6a3ea0"/><rect x="1416.50" y="946" width="15.83" height="21" fill="#7656a6"/><rect x="1433.33" y="946" width="15.83" height="21" fill="#9a67ad"/><rect x="1450.17" y="946" width="15.83" height="21" fill="#a65a8c"/><rect x="1467.00" y="946" width="15.83" height="21" fill="#d17ab7"/><rect x="1483.83" y="946" width="15.83" height="21" fill="#a98ad4"/><rect x="1500.67" y="946" width="15.83" height="21" fill="#c6a1cd"/><rect x="1517.50" y="946" width="15.83" height="21" fill="#f1c6dd"/><rect x="1534.33" y="946" width="15.83" height="21" fill="#5d2a16"/><rect x="1551.17" y="946" width="15.83" height="21" fill="#7f3e2c"/><rect x="1568.00" y="946" width="15.83" height="21" fill="#a4532a"/><rect x="1584.83" y="946" width="15.83" height="21" fill="#b85f23"/><rect x="1601.67" y="946" width="15.83" height="21" fill="#ce7c3a"/><rect x="1618.50" y="946" width="15.83" height="21" fill="#b7836a"/><rect x="1635.33" y="946" width="15.83" height="21" fill="#e4b57e"/><rect x="1652.17" y="946" width="15.83" height="21" fill="#d6d0cc"/><rect x="1669.00" y="946" width="15.83" height="21" fill="#c9d1ca"/><rect x="1685.83" y="946" width="15.83" height="21" fill="#000000"/><rect x="1702.67" y="946" width="15.83" height="21" fill="#3b393a"/><rect x="1719.50" y="946" width="15.83" height="21" fill="#575757"/><rect x="1736.33" y="946" width="15.83" height="21" fill="#6e6e6e"/><rect x="1753.17" y="946" width="15.83" height="21" fill="#828282"/><rect x="1770.00" y="946" width="15.83" height="21" fill="#999999"/><rect x="1786.83" y="946" width="15.83" height="21" fill="#ababab"/><rect x="1803.67" y="946" width="15.83" height="21" fill="#c8c8c8"/><rect x="1820.50" y="946" width="15.83" height="21" fill="#d6d6d6"/><rect x="1837.33" y="946" width="15.83" height="21" fill="#ebebeb"/><rect x="1854.17" y="946" width="15.83" height="21" fill="#ffffff"/><path d="M329.5 947.5 L333 951.5" stroke="#444" stroke-width="2" stroke-linecap="round"/><path d="M324.5 958.2 L331.3 951 L338.3 958.2 L331.3 965.3 Z" fill="none" stroke="#444" stroke-width="2.2" stroke-linejoin="round"/><path d="M324.5 958.5 Q331.3 960.5 338.3 958.5 L331.3 965.3 Z" fill="#444"/><circle cx="339.5" cy="963.8" r="1.5" fill="#444"/></svg>
<div class="a" style="left:1872px;top:308px;width:48px;height:51px;background:#0977e8"></div>
<svg style="left:0;top:0" width="1920" height="1019" fill="none" stroke-linecap="round" stroke-linejoin="round"><path d="M1897 206 L1886 218 L1897 230 M1908 206 L1897 218 L1908 230" stroke="#777" stroke-width="1.8"/><path d="M1893.5 253.5 L1897.5 258.5" stroke="#3a3a3a" stroke-width="2.6"/><path d="M1885 267.4 L1896.7 256.5 L1908.5 267.4 L1896.7 279.5 Z" stroke="#3a3a3a" stroke-width="2.8" fill="none"/><path d="M1885 267.5 Q1896.7 271 1908.5 267.5 L1896.7 279.5 Z" fill="#3a3a3a"/><path d="M1908.2 272.5 Q1905.5 276 1905.8 277.3 A2.4 2.4 0 0 0 1910.6 277.3 Q1910.9 276 1908.2 272.5 Z" fill="#3a3a3a"/><g stroke="#fff" stroke-width="2.6" fill="none" stroke-linecap="butt" stroke-linejoin="miter"><rect x="1885.3" y="321.5" width="7.5" height="8"/><path d="M1906.5 321.5 H1898.8 V329.5 H1907.5 V325"/><rect x="1885.3" y="336.3" width="7.5" height="8"/><rect x="1898.8" y="336.3" width="8.7" height="8"/></g><rect x="1906.2" y="320.2" width="2.6" height="2.6" fill="#fff"/><rect x="1885.5" y="388.8" width="23" height="20" stroke="#3a3a3a" stroke-width="3" fill="none" stroke-linejoin="miter"/><path d="M1887 407.3 L1893 400.5 L1897 403.5 L1902 398 L1907 404 V407.3 Z" fill="#777"/><rect x="1889.5" y="391.5" width="2.5" height="2.5" fill="#555"/><path d="M1896.7 453.5 L1908.5 461.2 L1896.7 469 L1884.8 461.2 Z" stroke="#3a3a3a" stroke-width="2.8" fill="none"/><path d="M1884.8 469 L1896.7 476.8 L1908.5 469" stroke="#3a3a3a" stroke-width="2.8" fill="none"/><path d="M1886.7 519 H1902 L1907.6 524.7 V541.8 H1886.7 Z" stroke="#3a3a3a" stroke-width="2.8" fill="none" stroke-linejoin="miter"/><path d="M1902 519 V524.7 H1907.6 Z" fill="#3a3a3a"/><path d="M1890.5 529 H1891 M1890.5 535.3 H1891" stroke="#3a3a3a" stroke-width="2.6"/><path d="M1895 529 H1904.5 M1895 535.3 H1904.5" stroke="#3a3a3a" stroke-width="2.4"/><path d="M1884.6 585.5 V608.5 H1910" stroke="#3a3a3a" stroke-width="2.6" fill="none" stroke-linecap="butt" stroke-linejoin="miter"/><path d="M1890.5 600.6 L1898.5 591.8 L1906.4 600.6" stroke="#3a3a3a" stroke-width="2" fill="none"/><circle cx="1890.5" cy="600.6" r="2.8" fill="#3a3a3a"/><circle cx="1898.5" cy="591.8" r="2.8" fill="#3a3a3a"/><circle cx="1906.4" cy="600.6" r="2.8" fill="#3a3a3a"/><rect x="1884.2" y="649.9" width="24.3" height="24.2" rx="2.5" fill="#3a3a3a"/><g fill="#f4f4f4"><rect x="1887" y="652.6" width="18.7" height="4"/><rect x="1887" y="660" width="4.6" height="4.5"/><rect x="1894.1" y="660" width="4.6" height="4.5"/><rect x="1901.1" y="660" width="4.6" height="4.5"/><rect x="1887" y="667" width="4.6" height="4.5"/><rect x="1894.1" y="667" width="4.6" height="4.5"/><rect x="1901.1" y="667" width="4.6" height="4.5"/></g><path d="M1883.8 716.5 H1898.5 V722.5 H1909 V740.7 H1883.8 Z" fill="#3a3a3a"/><g fill="#f4f4f4"><rect x="1886.8" y="719.5" width="4.5" height="5"/><rect x="1886.8" y="731" width="7.5" height="6.7"/><rect x="1894.3" y="724.8" width="2.7" height="4.6"/><rect x="1898.5" y="729" width="2.6" height="8.7"/><rect x="1903.5" y="725.5" width="2.6" height="12.2"/><rect x="1891.3" y="727.5" width="3" height="2"/></g><path d="M1884.5 786.5 V783.4 H1909 V786.5" stroke="#3a3a3a" stroke-width="2.2" fill="none" stroke-linecap="butt" stroke-linejoin="miter"/><rect x="1886.6" y="793" width="11.3" height="3.6" fill="#3a3a3a"/><path d="M1897.9 794.8 H1906.5 V801" stroke="#3a3a3a" stroke-width="1.6" fill="none"/><rect x="1895.5" y="802.4" width="13.5" height="4.2" fill="#3a3a3a"/><g fill="#3a3a3a"><rect x="1883.8" y="850.6" width="6.5" height="5" rx="1.5"/><rect x="1903.3" y="850.6" width="6.5" height="5" rx="1.5"/><rect x="1883.8" y="867" width="6.5" height="5" rx="1.5"/><rect x="1903.3" y="867" width="6.5" height="5" rx="1.5"/><rect x="1893" y="858.8" width="7.5" height="5" rx="1.5"/></g><path d="M1890 853 Q1896.8 853 1896.8 861.3 Q1896.8 869.5 1890 869.5 M1903.5 853 Q1896.8 853 1896.8 861.3 Q1896.8 869.5 1903.5 869.5" stroke="#3a3a3a" stroke-width="1.6" fill="none"/></svg>
<div class="a" style="left:1905px;top:918px;width:15px;height:90px;background:#ccd0d3;border-radius:4px 0 0 4px"></div>
<div class="a" style="left:0;top:969px;width:1920px;height:1px;background:#e6e6e6"></div>
<div class="a" style="left:253px;top:974px;width:1px;height:45px;background:#e0e0e0"></div>
<svg style="left:0;top:0" width="1920" height="1019" fill="none" stroke-linecap="butt"><path d="M27.5 985 V1002 M58.5 985 V1002" stroke="#555" stroke-width="2.4"/><rect x="33.5" y="986" width="19" height="15" stroke="#333" stroke-width="3" fill="none"/><path d="M239.5 990.5 H250.5 L245 997 Z" fill="#888"/><path d="M391 986 V1002 M383 994 H399" stroke="#444" stroke-width="2.6"/><circle cx="1508" cy="994" r="11.5" stroke="#444" stroke-width="2.6" fill="none"/><path d="M1504.5 987.5 L1513.5 994 L1504.5 1000.5 Z" fill="#444"/><path d="M1539 994 H1551" stroke="#444" stroke-width="3"/><rect x="1564" y="990.5" width="122" height="6" rx="3" fill="#dcdcdc"/><rect x="1564" y="990.5" width="20" height="6" rx="3" fill="#bbb"/><circle cx="1584" cy="993.5" r="7.5" fill="#fff" stroke="#bbb" stroke-width="2.2"/><path d="M1703.5 987 V1002 M1696 994.5 H1711" stroke="#444" stroke-width="3"/><path d="M1783 992 H1791 L1787 996.5 Z" fill="#999"/><path d="M1818.5 992 V984.5 H1825.5 M1833.5 984.5 H1840.5 V992 M1840.5 997 V1004.5 H1833.5 M1825.5 1004.5 H1818.5 V997" stroke="#444" stroke-width="2.8" fill="none"/><rect x="1855" y="983.5" width="22" height="21" stroke="#444" stroke-width="2.8" fill="none"/><path d="M1859.5 994 H1872.5" stroke="#444" stroke-width="2"/><path d="M1858.5 994 L1862.5 990 V998 Z M1873.5 994 L1869.5 990 V998 Z" fill="#444"/></svg>
<div class="t" style="left:95px;top:986.5px;font-size:18px;color:#222">页-1</div>
<div class="t" style="left:295px;top:986.5px;font-size:18px;color:#111;font-weight:bold">页-1</div>
<div class="t" style="left:1364px;top:986.5px;font-size:18px;color:#222">形状 ID：113</div>
<div class="t" style="left:1733px;top:985px;font-size:19px;color:#222">55%</div>
</body></html>
